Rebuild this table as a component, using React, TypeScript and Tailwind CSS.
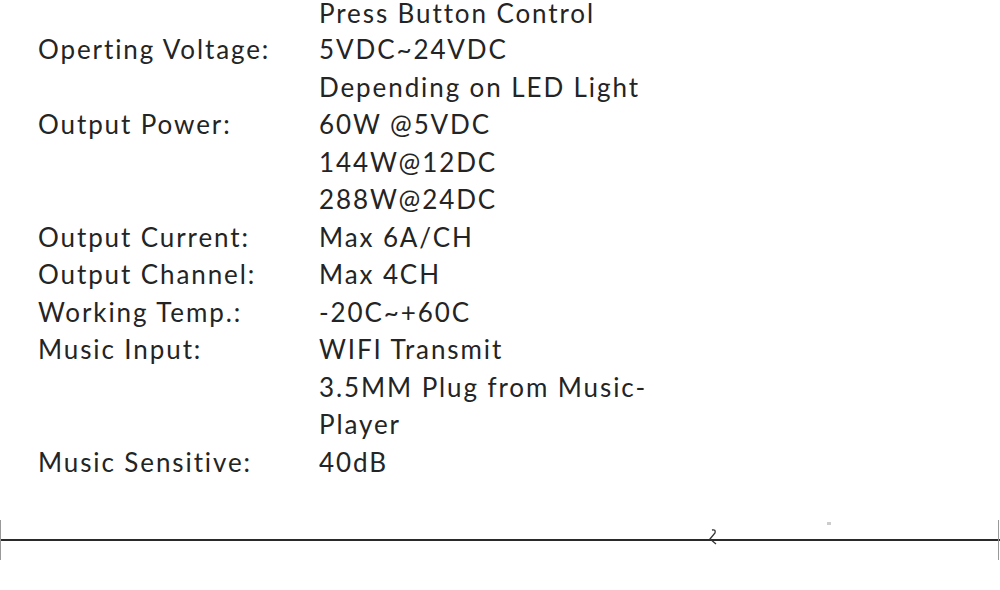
const specs: [string, string[]][] = [
  ["", ["Press Button Control"]],
  ["Operting Voltage:", ["5VDC~24VDC", "Depending on LED Light"]],
  ["Output Power:", ["60W @5VDC", "144W@12DC", "288W@24DC"]],
  ["Output Current:", ["Max 6A/CH"]],
  ["Output Channel:", ["Max 4CH"]],
  ["Working Temp.:", ["-20C~+60C"]],
  ["Music Input:", ["WIFI Transmit", "3.5MM Plug from Music-", "Player"]],
  ["Music Sensitive:", ["40dB"]],
];

export default function App() {
  return (
    <div className="w-[1000px] h-[590px] bg-white overflow-hidden text-[#242424] font-['Lato',sans-serif]">
      <div className="pl-[38px] text-[26px] leading-[37.5px] tracking-[1.9px]">
        {specs.map(([label, values], i) => (
          <div key={i} className={i === 0 ? "flex leading-[26px] pb-[5px]" : "flex"}>
            <div className="w-[281px] shrink-0">{label}</div>
            <div>
              {values.map((v) => (
                <div key={v}>{v}</div>
              ))}
            </div>
          </div>
        ))}
      </div>
      <div className="mt-[39px] relative h-[40px] flex items-center">
        <div className="absolute left-0 top-0 h-[40px] w-px bg-[#999]" />
        <div className="w-full h-[2px] bg-[#2a2a2a]" />
        <div className="absolute right-[1px] top-0 h-[40px] w-px bg-[#999]" />
        <svg className="absolute left-[707px] top-[8px]" width="14" height="20" viewBox="0 0 14 20">
          <path d="M5 2 Q9 1 8 5 L3 11 L9 16" fill="none" stroke="#333" strokeWidth="1.3" />
        </svg>
        <div className="absolute left-[827px] top-[2px] w-[4px] h-[3px] bg-[#ccc]" />
      </div>
    </div>
  );
}
